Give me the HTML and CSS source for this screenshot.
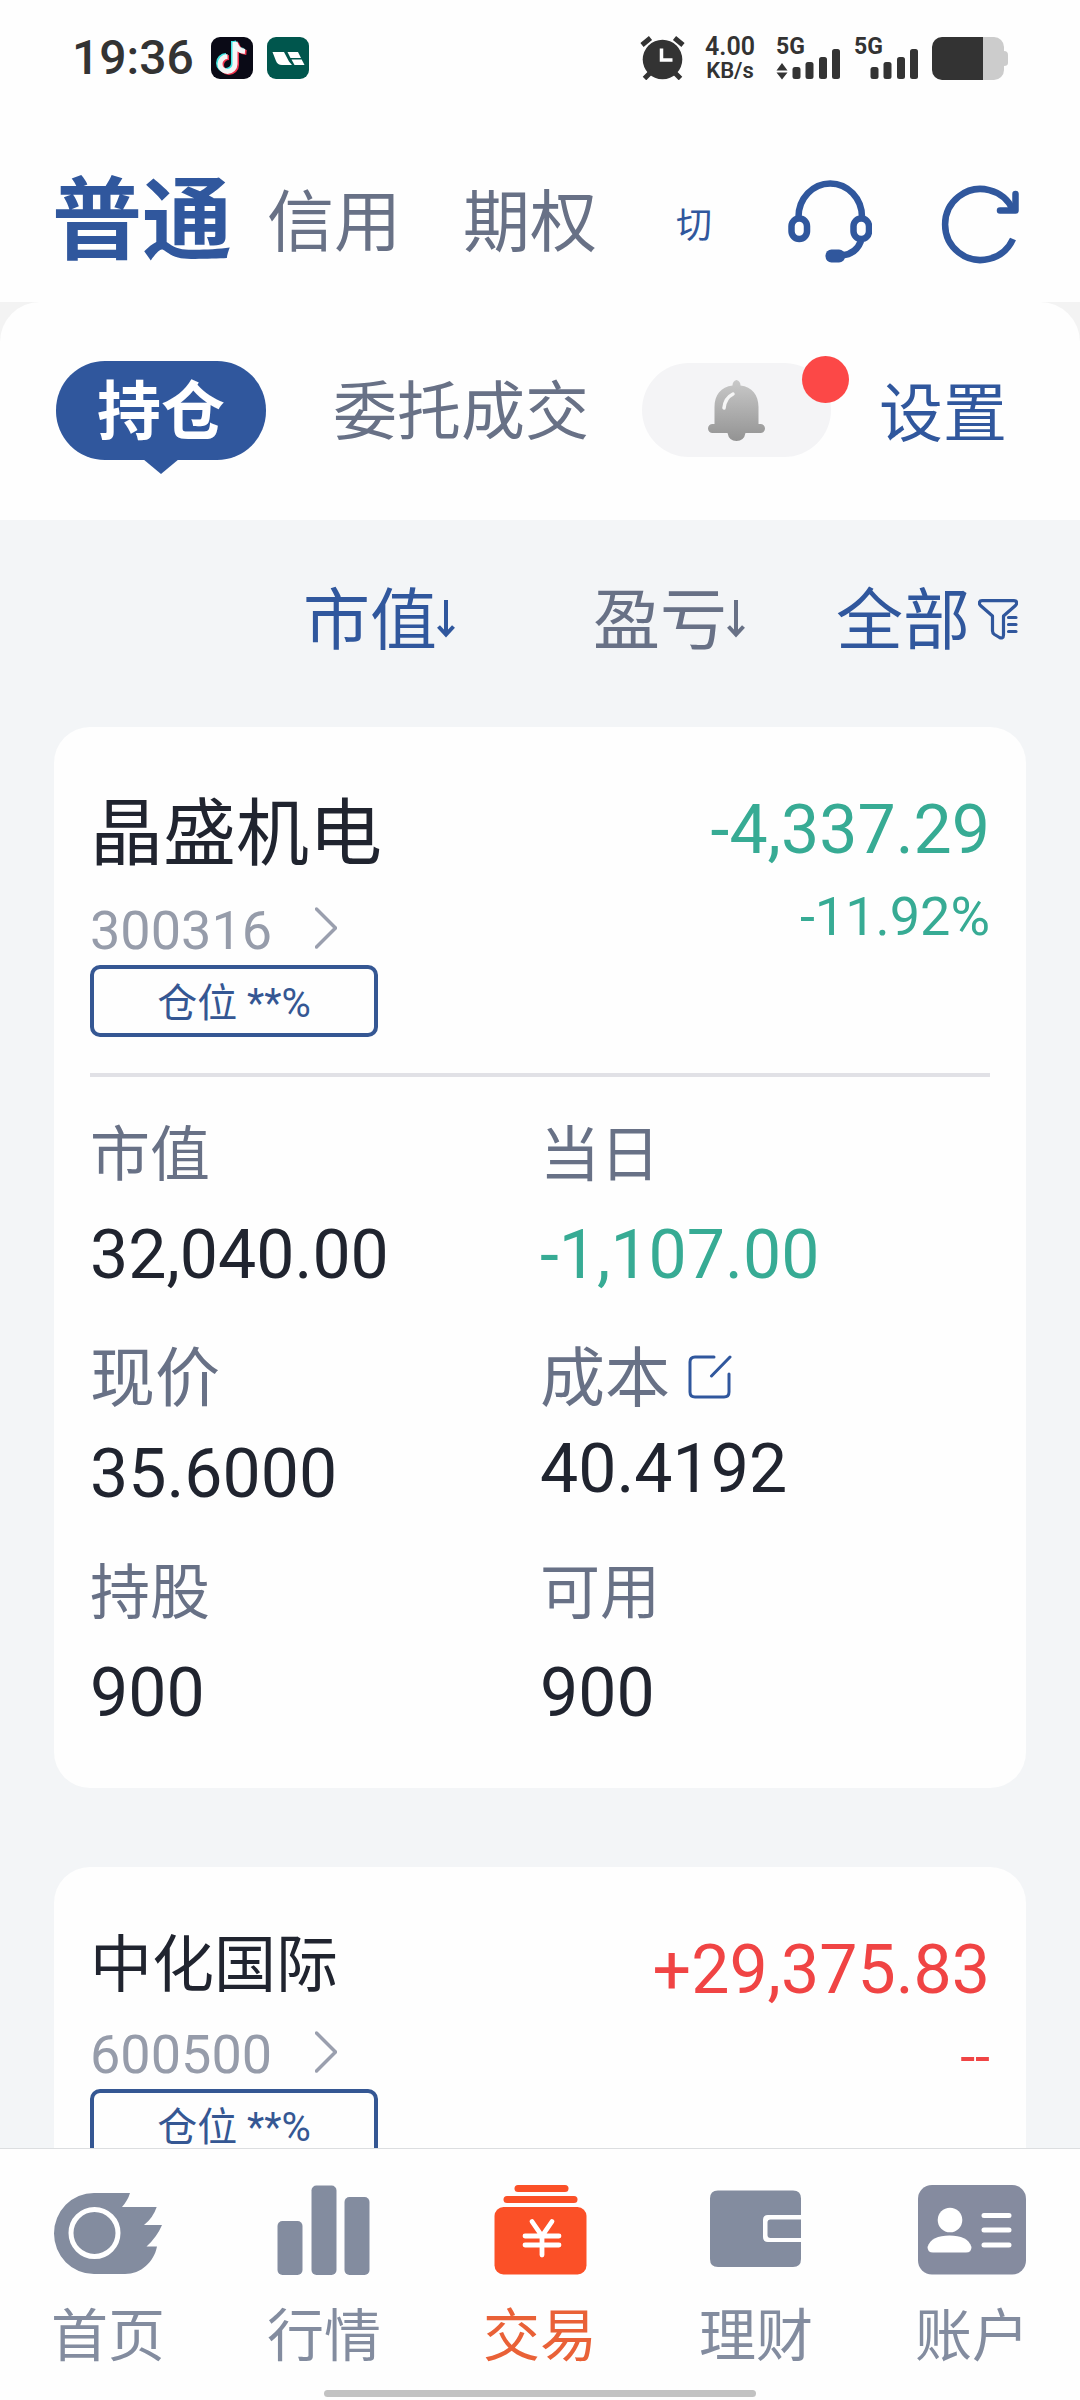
FILE: index.html
```html
<!DOCTYPE html>
<html lang="zh-CN">
<head>
<meta charset="utf-8">
<meta name="viewport" content="width=device-width, initial-scale=1">
<title>持仓</title>
<link rel="stylesheet" href="styles.css">
</head>
<body>
<div class="app">
  <div class="status">
    <span class="status-time">19:36</span>
    <svg class="app-icon" viewBox="0 0 42 42" aria-hidden="true">
      <rect width="42" height="42" rx="9" fill="#0a0a16"/>
      <g fill="none" stroke-width="5">
        <path transform="translate(-1.500 -1)" stroke="#3fe6e2" d="M24 5V27A7.500 7.500 0 1 1 16.500 19.500M24 5C25 11 29 14 34 14.500"/>
        <path transform="translate(1.500 1)" stroke="#f0364f" d="M24 5V27A7.500 7.500 0 1 1 16.500 19.500M24 5C25 11 29 14 34 14.500"/>
        <path stroke="#f5f5f5" d="M24 5V27A7.500 7.500 0 1 1 16.500 19.500M24 5C25 11 29 14 34 14.500"/>
      </g>
    </svg>
    <svg class="app-icon" viewBox="0 0 42 42" aria-hidden="true">
      <rect width="42" height="42" rx="9" fill="#00564d"/>
      <g fill="#fff">
        <path d="M5.500 15H17L22 24.500L25 28H15C12 28 10 26.500 9 24Z"/>
        <path d="M20.500 15H31L34 21H23.500Z"/>
        <path d="M24.500 22.500H34.700L37.500 28H27.500Z"/>
      </g>
    </svg>
    <div class="status-right">
      <svg class="alarm" viewBox="0 0 46 44" aria-hidden="true">
        <circle cx="22.500" cy="23.500" r="19.800" fill="#333"/>
        <g fill="none" stroke="#333" stroke-width="5"><path d="M2 9L10.500 2M34.500 2L43 9M4.500 42.500L12 35M40.500 42.500L33 35"/></g>
        <path d="M21.500 12.500V24H32.500" fill="none" stroke="#fff" stroke-width="3.500"/>
      </svg>
      <div class="speed"><span class="speed-value">4.00</span><span class="speed-unit">KB/s</span></div>
      <svg class="signal" viewBox="0 0 66 56" aria-hidden="true">
        <text x="0" y="24" class="signal-text">5G</text>
        <g fill="#333"><path d="M0.500 40.500L6 33L11.500 40.500ZM0.500 42.500L6 49.500L11.500 42.500Z"/>
        <rect x="16.500" y="37" width="8" height="12" rx="2.500"/><rect x="29.500" y="32" width="8" height="17" rx="2.500"/><rect x="43" y="27" width="8" height="22" rx="2.500"/><rect x="56" y="19" width="8" height="30" rx="2.500"/></g>
      </svg>
      <svg class="signal" viewBox="0 0 66 56" aria-hidden="true">
        <text x="0" y="24" class="signal-text">5G</text>
        <g fill="#333"><rect x="16.500" y="37" width="8" height="12" rx="2.500"/><rect x="29.500" y="32" width="8" height="17" rx="2.500"/><rect x="43" y="27" width="8" height="22" rx="2.500"/><rect x="56" y="19" width="8" height="30" rx="2.500"/></g>
      </svg>
      <svg class="battery" viewBox="0 0 76 43" aria-hidden="true">
        <path fill="#ccc" d="M51 0H62A10 10 0 0 1 72 10V14Q76 14 76 18V26Q76 29 72 29V33A10 10 0 0 1 62 43H51Z"/>
        <path fill="#333" d="M51 0H10A10 10 0 0 0 0 10V33A10 10 0 0 0 10 43H51Z"/>
      </svg>
    </div>
  </div>

  <header class="header">
    <nav class="accounts">
      <button class="account account-active" type="button">普通</button>
      <button class="account" type="button">信用</button>
      <button class="account" type="button">期权</button>
    </nav>
    <div class="tools">
      <button class="switch" type="button">切</button>
      <button class="tool" type="button" aria-label="客服">
        <svg viewBox="0 0 84 84" width="84" height="84" fill="none" stroke="#30579d" stroke-width="6.500">
          <path d="M10.500 37A31.700 33.500 0 0 1 74 37"/>
          <rect x="3.500" y="38.500" width="15.500" height="20.500" rx="7.700"/>
          <rect x="65.500" y="38.500" width="15.500" height="20.500" rx="7.700"/>
          <path d="M73 61Q68 74 54 75.500"/>
          <rect x="37.500" y="69.500" width="19.500" height="13" rx="6" fill="#30579d" stroke="none"/>
        </svg>
      </button>
      <button class="tool" type="button" aria-label="刷新">
        <svg viewBox="0 0 84 84" width="84" height="84" fill="none" stroke="#30579d" stroke-width="6.500" stroke-linecap="round" stroke-linejoin="round">
          <path stroke-linecap="butt" d="M75 59A35.500 35.500 0 1 1 75 30"/>
          <path d="M77.500 14V30.500H62"/>
        </svg>
      </button>
    </div>
  </header>

  <div class="panel-wrap">
    <div class="panel">
      <button class="pill" type="button">持仓</button>
      <button class="entrust" type="button">委托成交</button>
      <button class="bell" type="button" aria-label="提醒">
        <svg viewBox="0 0 57 61" width="57" height="61">
          <defs>
            <linearGradient id="dome" x1="0" y1="0" x2="0" y2="1"><stop offset="0" stop-color="#c9c9c9"/><stop offset="1" stop-color="#939393"/></linearGradient>
          </defs>
          <path fill="url(#dome)" d="M28.500 0Q32.500 1 32.500 5.500C44 7 50.500 15 50.500 27V44H52.500A4.500 4.500 0 0 1 52.500 53H37.500Q36 61 28.500 61T19.500 53H4.500A4.500 4.500 0 0 1 4.500 44H6.500V27C6.500 15 13 7 24.500 5.500Q24.500 1 28.500 0Z"/>
          <path d="M16 28Q17 18 25 14" fill="none" stroke="#f6f6f6" stroke-width="3.500" stroke-linecap="round"/>
        </svg>
        <span class="bell-dot"></span>
      </button>
      <button class="settings" type="button">设置</button>
    </div>
  </div>

  <main class="content">
    <div class="filters">
      <button class="filter filter-on filter-value" type="button">市值<svg viewBox="0 0 18 42" width="18" height="42"><path d="M9 0V34M1.500 26.500L9 34.500L16.500 26.500" fill="none" stroke="currentColor" stroke-width="4"/></svg></button>
      <button class="filter" type="button">盈亏<svg viewBox="0 0 18 42" width="18" height="42"><path d="M9 0V34M1.500 26.500L9 34.500L16.500 26.500" fill="none" stroke="currentColor" stroke-width="4"/></svg></button>
      <button class="filter filter-on filter-all" type="button">全部<svg viewBox="0 0 40 44" width="40" height="44" fill="none" stroke="currentColor" stroke-width="3.200" stroke-linecap="round" stroke-linejoin="round"><path d="M4 1.600H36C39 1.600 39.400 4.500 37.500 6.500L25.500 17V36C25.500 39 23.500 39.500 21.500 38.500L16.500 35.500C15 34.500 14.500 33.500 14.500 32V17L2.500 6.500C0.600 4.500 1 1.600 4 1.600Z"/><path d="M30.500 18.500H38M30.500 25.500H38M30.500 32.500H38"/></svg></button>
    </div>

    <article class="card">
      <div class="card-head">
        <div>
          <h2 class="name">晶盛机电</h2>
          <a class="code" href="#300316">300316<svg viewBox="0 0 22 48" width="22" height="48"><path d="M1.500 2L20.500 21L1.500 40" fill="none" stroke="#9a9fae" stroke-width="3.500" stroke-linecap="round"/></svg></a>
          <div class="tag">仓位 **%</div>
        </div>
        <div class="profit down">
          <div class="amount">-4,337.29</div>
          <div class="percent">-11.92%</div>
        </div>
      </div>
      <dl class="stats">
        <div class="stat"><dt>市值</dt><dd>32,040.00</dd></div>
        <div class="stat"><dt>当日</dt><dd class="down">-1,107.00</dd></div>
        <div class="stat stat-price"><dt>现价</dt><dd>35.6000</dd></div>
        <div class="stat stat-price stat-cost"><dt>成本<button class="edit" type="button" aria-label="修改成本"><svg viewBox="0 0 44 48" width="44" height="48" fill="none" stroke="#30579d" stroke-width="3" stroke-linecap="round"><path d="M26 2H7Q2 2 2 7V37Q2 42 7 42H36Q41 42 41 37V19"/><path d="M23.500 21L42 2"/></svg></button></dt><dd>40.4192</dd></div>
        <div class="stat"><dt>持股</dt><dd>900</dd></div>
        <div class="stat"><dt>可用</dt><dd>900</dd></div>
      </dl>
    </article>

    <article class="card">
      <div class="card-head">
        <div>
          <h2 class="name name-small">中化国际</h2>
          <a class="code" href="#600500">600500<svg viewBox="0 0 22 48" width="22" height="48"><path d="M1.500 2L20.500 21L1.500 40" fill="none" stroke="#9a9fae" stroke-width="3.500" stroke-linecap="round"/></svg></a>
          <div class="tag">仓位 **%</div>
        </div>
        <div class="profit up">
          <div class="amount">+29,375.83</div>
          <div class="percent">--</div>
        </div>
      </div>
    </article>
  </main>

  <footer class="footer">
    <nav class="tabs">
      <a class="tab" href="#home">
        <svg viewBox="0 0 108 92" width="108" height="92"><path fill="#838c9f" d="M40 9H76Q74 16 68 23H102.700Q99 34 90 41H108Q103 53 92.500 62.500H103C100 78 87 90 71 90H40A40 40.500 0 0 1 40 9Z"/><circle cx="40.500" cy="49" r="23.500" fill="none" stroke="#fff" stroke-width="5"/></svg>
        <span>首页</span>
      </a>
      <a class="tab" href="#market">
        <svg viewBox="0 0 108 92" width="108" height="92" fill="#838c9f"><rect x="7.500" y="37" width="25" height="54" rx="5"/><rect x="41.500" y="1.500" width="25" height="89.500" rx="5"/><rect x="74.500" y="13" width="25" height="78" rx="5"/></svg>
        <span>行情</span>
      </a>
      <a class="tab tab-active" href="#trade" aria-current="page">
        <svg viewBox="0 0 108 92" width="108" height="92"><g fill="#fb5027"><rect x="28.500" y="1" width="54" height="7" rx="3.500"/><rect x="17.500" y="12" width="74" height="7" rx="3.500"/><rect x="8.500" y="23" width="92" height="67.500" rx="9"/></g><path d="M46 37.500L56 52L66 37.500M56 52V71M39 52H73M39 61H73" fill="none" stroke="#fff" stroke-width="4.800" stroke-linecap="round"/></svg>
        <span>交易</span>
      </a>
      <a class="tab" href="#wealth">
        <svg viewBox="0 0 108 92" width="108" height="92"><path fill="#838c9f" d="M16 6.500H91Q99 6.500 99 14.500V31H66Q61 31 61 36V53Q61 58 66 58H99V75Q99 83 91 83H16Q8 83 8 75V14.500Q8 6.500 16 6.500Z"/><path fill="#838c9f" d="M99 35.500H68.500Q65.500 35.500 65.500 38.500V51Q65.500 54 68.500 54H99Z"/></svg>
        <span>理财</span>
      </a>
      <a class="tab" href="#account">
        <svg viewBox="0 0 108 92" width="108" height="92"><rect y="1" width="108" height="89.500" rx="14" fill="#858b9f"/><circle cx="32" cy="36" r="12.300" fill="#fff"/><path fill="#fff" d="M15 68.500Q9.500 68.500 9.500 63C12 55 20 51.500 31.500 51.500S51 55 53.500 63Q53.500 68.500 48 68.500Z"/><path d="M66 31.500H91M66 46H91M66 61H91" stroke="#fff" stroke-width="5" stroke-linecap="round"/></svg>
        <span>账户</span>
      </a>
    </nav>
    <div class="home-bar"></div>
  </footer>
</div>
</body>
</html>
```
FILE: styles.css
```css
* {
  box-sizing: border-box;
}

body {
  margin: 0;
  background: #f3f5f7;
  color: #20242f;
  font-family: Roboto, "Noto Sans CJK SC", sans-serif;
}

button {
  margin: 0;
  padding: 0;
  border: 0;
  background: none;
  color: inherit;
  font: inherit;
  white-space: nowrap;
}

a {
  color: inherit;
  text-decoration: none;
}

svg {
  display: block;
  flex: none;
}

.app {
  display: flex;
  flex-direction: column;
  height: 100vh;
}

/* System status bar */
.status {
  display: flex;
  align-items: center;
  gap: 14px;
  height: 116px;
  flex: none;
  padding: 0 72px 0 72px;
  background: #fefefe;
  color: #333;
}

.status-time {
  margin-right: 3px;
  font-size: 48px;
  font-weight: 500;
  line-height: 56px;
}

.app-icon {
  width: 42px;
  height: 42px;
}

.status-right {
  display: flex;
  align-items: center;
  margin-left: auto;
}

.alarm {
  width: 46px;
  height: 44px;
  margin-right: 20px;
}

.speed {
  display: flex;
  flex-direction: column;
  align-items: center;
  width: 48px;
  margin-right: 22px;
  padding-top: 2px;
  font-weight: 600;
}

.speed-value {
  font-size: 25px;
  line-height: 24px;
}

.speed-unit {
  font-size: 22px;
  line-height: 24px;
}

.signal {
  width: 66px;
  height: 56px;
  margin-right: 12px;
}

.signal-text {
  fill: #333;
  font-size: 23px;
  font-weight: 700;
}

.battery {
  width: 76px;
  height: 43px;
}

/* Account type header */
.header {
  display: flex;
  align-items: center;
  justify-content: space-between;
  flex: none;
  height: 186px;
  padding: 26px 58px 0 52px;
  background: #fefefe;
}

.accounts,
.tools {
  display: flex;
  align-items: center;
}

.account {
  padding: 2px 31px 0;
  color: #687186;
  font-size: 67px;
  line-height: 96px;
}

.account-active {
  padding: 0;
  margin-right: 4px;
  color: #30579d;
  font-size: 90px;
  font-weight: 700;
}

.switch {
  padding-top: 8px;
  margin-right: 76px;
  color: #30579d;
  font-size: 36px;
  line-height: 52px;
}

.tool + .tool {
  margin-left: 66px;
}

/* Section tabs */
.panel-wrap {
  flex: none;
  background: #f3f3f3;
}

.panel {
  display: flex;
  align-items: center;
  gap: 48px;
  padding: 58px 56px 60px;
  border-radius: 40px 40px 0 0;
  background: #fefefe;
}

.pill {
  position: relative;
  width: 210px;
  height: 99px;
  padding-top: 4px;
  border-radius: 49px;
  background: #30579d;
  color: #fff;
  font-size: 64px;
  font-weight: 700;
  line-height: 95px;
}

.pill::after {
  content: "";
  position: absolute;
  top: 98px;
  left: 50%;
  margin-left: -18px;
  border: 18px solid transparent;
  border-top: 15px solid #30579d;
  border-bottom: 0;
}

.entrust {
  padding: 6px 5px 0 19px;
  color: #687186;
  font-size: 64px;
  line-height: 92px;
}

.bell {
  position: relative;
  display: flex;
  align-items: center;
  justify-content: center;
  width: 189px;
  height: 94px;
  border-radius: 47px;
  background: #f4f4f6;
}

.bell-dot {
  position: absolute;
  top: -7px;
  right: -18px;
  width: 47px;
  height: 47px;
  border-radius: 50%;
  background: #fc4847;
}

.settings {
  padding-top: 10px;
  color: #30579d;
  font-size: 64px;
  line-height: 90px;
}

/* Holdings list */
.content {
  flex: 1;
  min-height: 0;
  overflow: hidden;
}

.filters {
  display: flex;
  align-items: center;
  justify-content: flex-end;
  gap: 91px;
  height: 207px;
  padding: 0 62px 6px 0;
}

.filter {
  display: flex;
  align-items: center;
  color: #687186;
  font-size: 67px;
  line-height: 96px;
}

.filter-on {
  color: #30579d;
}

.filter-value {
  margin-right: 47px;
}

.filter-all {
  gap: 8px;
}

.card {
  margin: 0 54px 79px;
  padding: 55px 36px 46px;
  border-radius: 36px;
  background: #fefefe;
}

.card-head {
  display: flex;
  justify-content: space-between;
}

.name {
  margin: 0;
  font-size: 73px;
  font-weight: 400;
  line-height: 104px;
}

.name-small {
  font-size: 62px;
  line-height: 88px;
}

.code {
  display: flex;
  align-items: center;
  gap: 43px;
  margin-top: 11px;
  color: #969caa;
  font-size: 54px;
  line-height: 68px;
}

.tag {
  width: 288px;
  padding-top: 6px;
  border: 4px solid #355793;
  border-radius: 10px;
  color: #355793;
  font-size: 40px;
  line-height: 58px;
  text-align: center;
}

.profit {
  padding-top: 1px;
  text-align: right;
}

.amount {
  font-size: 68px;
  line-height: 94px;
}

.percent {
  font-size: 54px;
  line-height: 80px;
}

.down {
  color: #37ab94;
}

.up {
  color: #f04444;
}

.stats {
  display: grid;
  grid-template-columns: 1fr 1fr;
  row-gap: 29px;
  margin: 36px 0 0;
  padding-top: 37px;
  border-top: 4px solid #e1e1e6;
}

.stat dt {
  margin-bottom: 8px;
  color: #687186;
  font-size: 60px;
  line-height: 84px;
}

.stat dd {
  margin: 0;
  font-size: 68px;
  line-height: 98px;
}

.stat-price dt {
  display: flex;
  align-items: center;
  gap: 18px;
  margin-bottom: 0;
  font-size: 65px;
  line-height: 92px;
}

.stat-cost dd {
  line-height: 88px;
}

/* Bottom navigation */
.footer {
  flex: none;
  padding: 35px 0 3px;
  border-top: 1px solid #dcdee0;
  background: #fefefe;
}

.tabs {
  display: grid;
  grid-template-columns: repeat(5, 1fr);
}

.tab {
  display: flex;
  flex-direction: column;
  align-items: center;
  gap: 19px;
  color: #838c9f;
  font-size: 57px;
  line-height: 84px;
}

.tab-active {
  color: #e96137;
}

.home-bar {
  width: 40%;
  height: 7px;
  margin: 11px auto 0;
  border-radius: 4px;
  background: #c2c2c2;
}
```
